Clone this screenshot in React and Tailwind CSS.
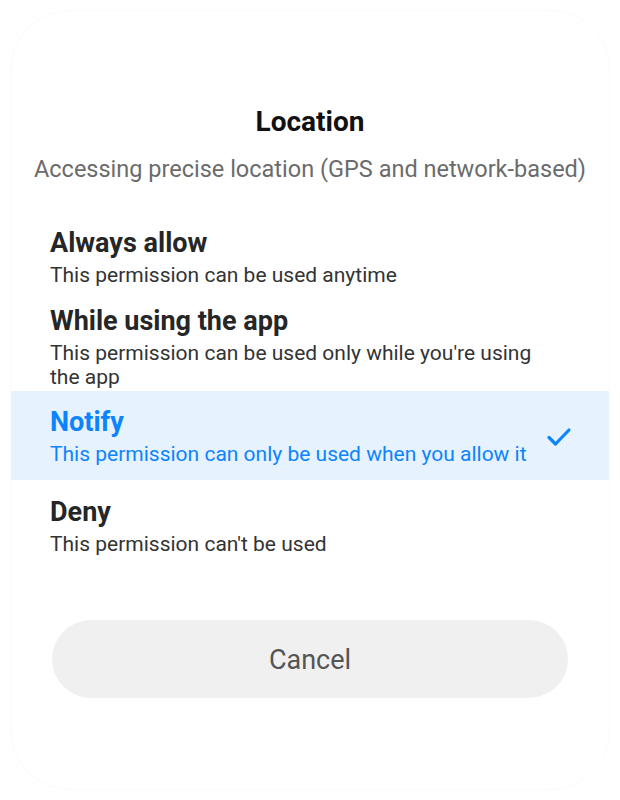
import React, { useState } from "react";

const options = [
  { id: "always", title: "Always allow", desc: "This permission can be used anytime", pad: "pt-[9px] pb-[10px]" },
  { id: "while", title: "While using the app", desc: "This permission can be used only while you're using the app", pad: "pt-[9px] pb-[2px]" },
  { id: "notify", title: "Notify", desc: "This permission can only be used when you allow it", pad: "pt-[16px] pb-[14px]" },
  { id: "deny", title: "Deny", desc: "This permission can't be used", pad: "pt-[17px] pb-[9px]" },
];

function Check() {
  return (
    <svg width="26" height="22" viewBox="0 0 26 22" fill="none" className="shrink-0">
      <path d="M3 11.5 L9.5 18 L23 4" stroke="#0d84ff" strokeWidth="3.2" strokeLinecap="round" strokeLinejoin="round" />
    </svg>
  );
}

export default function App() {
  const [selected, setSelected] = useState("notify");

  return (
    <div className="w-[620px] h-[800px] bg-white p-[10px] font-['Roboto',sans-serif]">
      <div className="h-full rounded-[60px] border border-[#fbfbfb] bg-white flex flex-col">
        <div className="pt-[95px] text-center text-[28px] leading-[32px] font-bold text-[#111]">Location</div>
        <div className="mt-[17px] text-center text-[23.5px] leading-[28px] text-[#6b6b6b]">
          Accessing precise location (GPS and network-based)
        </div>

        <div className="mt-[36px] flex flex-col">
          {options.map((o) => {
            const active = selected === o.id;
            return (
              <div
                key={o.id}
                onClick={() => setSelected(o.id)}
                className={`flex items-center pl-[39px] pr-[37px] cursor-pointer ${o.pad} ${active ? "bg-[#e6f2fe]" : ""}`}
              >
                <div className="flex-1 max-w-[500px]">
                  <div className={`text-[27px] leading-[30px] font-bold ${active ? "text-[#0d84ff]" : "text-[#262626]"}`}>
                    {o.title}
                  </div>
                  <div className={`mt-[5px] text-[21px] leading-[24px] ${active ? "text-[#0d84ff]" : "text-[#333]"}`}>
                    {o.desc}
                  </div>
                </div>
                <div className="ml-auto w-[26px] flex justify-center">{active && <Check />}</div>
              </div>
            );
          })}
        </div>

        <div className="mt-[55px] px-[41px]">
          <button className="w-full h-[78px] rounded-full bg-[#f0f0f0] pt-[2px] text-[27px] text-[#555]">Cancel</button>
        </div>
      </div>
    </div>
  );
}
